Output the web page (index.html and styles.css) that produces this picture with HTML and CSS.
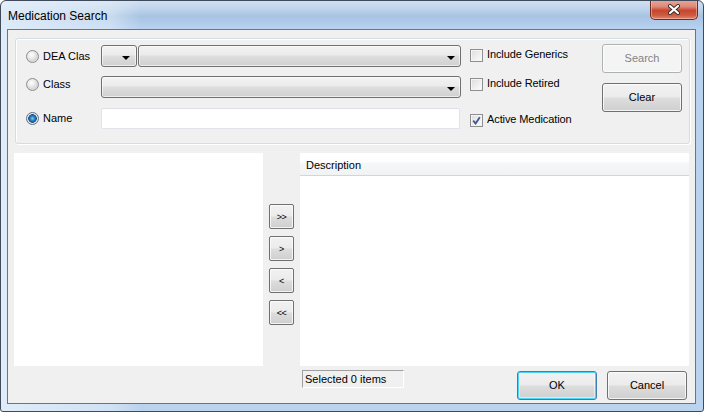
FILE: index.html
```html
<!DOCTYPE html>
<html>
<head>
<meta charset="utf-8">
<title>Medication Search</title>
<link rel="stylesheet" href="styles.css">
</head>
<body>
<div class="window">
  <div class="titlebar">
    <span class="title">Medication Search</span>
    <div class="close-btn">
      <svg width="14" height="11" viewBox="0 0 14 11">
        <path d="M3 2 L11 9 M11 2 L3 9" stroke="#3a2a2a" stroke-width="4" stroke-linecap="round" fill="none"/>
        <path d="M3 2 L11 9 M11 2 L3 9" stroke="#ffffff" stroke-width="2.2" stroke-linecap="round" fill="none"/>
      </svg>
    </div>
  </div>
  <div class="frame">
    <div class="client">
      <div class="group">
        <div class="left-col">
          <div class="row">
            <label class="opt"><span class="radio"></span><span class="opt-text">DEA Clas</span></label>
            <div class="combo combo-small"><span class="arrow"></span></div>
            <div class="combo combo-wide"><span class="arrow"></span></div>
          </div>
          <div class="row row-2">
            <label class="opt opt-raised"><span class="radio"></span><span class="opt-text">Class</span></label>
            <div class="combo combo-full"><span class="arrow"></span></div>
          </div>
          <div class="row row-3">
            <label class="opt"><span class="radio radio-on"></span><span class="opt-text">Name</span></label>
            <div class="textbox"></div>
          </div>
        </div>
        <div class="check-col">
          <div class="check check-1"><span class="box"></span><span class="check-text">Include Generics</span></div>
          <div class="check check-2"><span class="box"></span><span class="check-text">Include Retired</span></div>
          <div class="check check-3"><span class="box box-on">
            <svg width="9" height="9" viewBox="0 0 9 9"><path d="M1.2 4.6 L3.6 7.4 L7.8 1.2" stroke="#3f5796" stroke-width="1.8" fill="none"/></svg>
          </span><span class="check-text">Active Medication</span></div>
        </div>
        <div class="btn-col">
          <div class="btn btn-disabled">Search</div>
          <div class="btn btn-clear">Clear</div>
        </div>
      </div>

      <div class="lists">
        <div class="list-left"></div>
        <div class="arrows">
          <div class="abtn">&gt;&gt;</div>
          <div class="abtn">&gt;</div>
          <div class="abtn">&lt;</div>
          <div class="abtn">&lt;&lt;</div>
        </div>
        <div class="list-right">
          <div class="list-header">Description</div>
        </div>
      </div>

      <div class="footer">
        <div class="status">Selected 0 items</div>
        <div class="btn btn-default">OK</div>
        <div class="btn btn-cancel">Cancel</div>
      </div>
    </div>
  </div>
</div>
</body>
</html>
```

FILE: styles.css
```css
html, body {
  margin: 0;
  padding: 0;
  background: #ffffff;
}

.window {
  width: 704px;
  height: 412px;
  box-sizing: border-box;
  border: 1px solid #3f4b5a;
  border-radius: 6px 6px 3px 3px;
  background:
    linear-gradient(90deg, rgba(230,240,250,0.85) 0px, rgba(230,240,250,0.5) 110px, rgba(230,240,250,0) 140px),
    linear-gradient(180deg, #cfe0f2 0px, #bed4ec 8px, #a9c4e1 15px, #b0cbea 22px, #b8d2ef 28px, #bad3ee 100%);
  display: flex;
  flex-direction: column;
  overflow: hidden;
  font-family: "Liberation Sans", Arial, sans-serif;
}

.titlebar {
  height: 28px;
  flex: none;
  display: flex;
  align-items: flex-start;
  padding-left: 7px;
  padding-right: 5px;
}

.title {
  font-size: 12px;
  color: #000;
  line-height: 14px;
  margin-top: 8px;
}

.close-btn {
  margin-left: auto;
  margin-top: -1px;
  width: 48px;
  height: 20px;
  box-sizing: border-box;
  border: 1px solid #6f2b22;
  border-top: none;
  border-radius: 0 0 5px 5px;
  background: linear-gradient(180deg, #e9a899 0%, #dc8a78 35%, #c6462f 55%, #cc5a40 80%, #e08a6e 100%);
  box-shadow: inset 0 0 0 1px rgba(255,200,190,0.5);
  display: flex;
  align-items: center;
  justify-content: center;
}

.frame {
  flex: 1;
  padding: 0 7px 7px 6px;
  display: flex;
}

.client {
  flex: 1;
  border: 1px solid #66768a;
  background: #f0f0f0;
  display: flex;
  flex-direction: column;
  font-size: 11px;
  color: #000;
}

/* group box */
.group {
  margin: 8px 5px 0 7px;
  height: 106px;
  box-sizing: border-box;
  border: 1px solid #d5dde4;
  border-radius: 3px;
  box-shadow: inset 1px 1px 0 #ffffff, 1px 1px 0 #ffffff;
  display: flex;
  flex: none;
}

.left-col {
  width: 435px;
  padding: 6px 0 0 10px;
}

.row {
  display: flex;
  align-items: center;
  height: 22px;
}

.row-2 { margin-top: 9px; }
.row-3 { margin-top: 10px; height: 21px; }

.opt {
  width: 75px;
  display: flex;
  align-items: center;
  flex: none;
}

.opt-raised { margin-bottom: 5px; }

.radio {
  width: 13px;
  height: 13px;
  box-sizing: border-box;
  border-radius: 50%;
  border: 1px solid #8d8d8d;
  background: radial-gradient(circle at 40% 35%, #fdfdfd 0, #eeeeee 3px, #d7d7d7 6px, #e9e9e9 100%);
  flex: none;
}

.radio-on {
  border-color: #5a6f86;
  background: radial-gradient(circle at 50% 50%, #6fd0ff 0, #2a8ad6 2px, #1a5f9e 3.5px, #2c4c70 4px, #e8e8e8 4.6px, #f2f2f2 100%);
}

.opt-text {
  margin-left: 4px;
  line-height: 13px;
}

.combo {
  height: 22px;
  box-sizing: border-box;
  border: 1px solid #707070;
  border-radius: 3px;
  background: linear-gradient(180deg, #f3f3f3 0%, #ebebeb 45%, #dedede 50%, #d0d0d0 100%);
  box-shadow: inset 0 0 0 1px rgba(255,255,255,0.6);
  display: flex;
  align-items: center;
  justify-content: flex-end;
  flex: none;
}

.combo-small { width: 36px; padding-right: 6px; }
.combo-wide { width: 323px; margin-left: 1px; padding-right: 5px; }
.combo-full { width: 360px; padding-right: 5px; }

.arrow {
  width: 0;
  height: 0;
  border-left: 4px solid transparent;
  border-right: 4px solid transparent;
  border-top: 4px solid #000;
  margin-top: 3px;
}

.textbox {
  width: 359px;
  height: 21px;
  box-sizing: border-box;
  background: #ffffff;
  border: 1px solid #e2e3ea;
  border-top-color: #dcdfe6;
  border-radius: 2px;
}

/* check column */
.check-col {
  margin-left: 9px;
  width: 132px;
  padding-top: 10px;
}

.check {
  display: flex;
  align-items: center;
  height: 13px;
}

.check-2 { margin-top: 16px; }
.check-3 { margin-top: 23px; }

.box {
  width: 13px;
  height: 13px;
  box-sizing: border-box;
  border: 1px solid #8f8f8f;
  background: linear-gradient(135deg, #dcdcdc 0%, #f0f0f0 60%, #fbfbfb 100%);
  box-shadow: inset 0 0 0 1px #f4f4f4;
  flex: none;
  display: flex;
  align-items: center;
  justify-content: center;
}

.check-text {
  margin-left: 4px;
  margin-bottom: 3px;
  letter-spacing: -0.1px;
}

/* buttons */
.btn-col {
  width: 80px;
  padding-top: 5px;
}

.btn {
  width: 80px;
  height: 29px;
  box-sizing: border-box;
  border: 1px solid #707070;
  border-radius: 3px;
  background: linear-gradient(180deg, #f2f2f2 0%, #ebebeb 48%, #dddddd 52%, #cfcfcf 100%);
  box-shadow: inset 0 0 0 1px rgba(255,255,255,0.75);
  display: flex;
  align-items: center;
  justify-content: center;
  flex: none;
  font-size: 11px;
  padding-bottom: 2px;
}

.btn-disabled {
  border-color: #adb2b5;
  background: #f4f4f4;
  box-shadow: inset 0 0 0 1px #fcfcfc;
  color: #838383;
}

.btn-clear { margin-top: 10px; }

/* lists */
.lists {
  margin-top: 9px;
  height: 213px;
  display: flex;
  flex: none;
}

.list-left {
  margin-left: 6px;
  width: 249px;
  background: #ffffff;
}

.arrows {
  width: 37px;
  padding: 51px 0 0 6px;
  box-sizing: border-box;
  display: flex;
  flex-direction: column;
  gap: 7px;
}

.abtn {
  width: 25px;
  height: 25px;
  box-sizing: border-box;
  border: 1px solid #707070;
  border-radius: 2px;
  background: linear-gradient(180deg, #f2f2f2 0%, #ebebeb 48%, #dddddd 52%, #cfcfcf 100%);
  box-shadow: inset 0 0 0 1px rgba(255,255,255,0.75);
  display: flex;
  align-items: center;
  justify-content: center;
  font-size: 9px;
  letter-spacing: -0.5px;
}

.list-right {
  width: 389px;
  background: #ffffff;
}

.list-header {
  height: 23px;
  box-sizing: border-box;
  border-bottom: 1px solid #d5d5d5;
  background: linear-gradient(180deg, #ffffff 0%, #ffffff 40%, #f6f7f9 45%, #f1f2f4 100%);
  padding: 6px 0 0 6px;
  font-size: 11px;
}

/* footer */
.footer {
  flex: 1;
  display: flex;
  align-items: flex-start;
  padding: 0 8px 0 294px;
}

.status {
  margin-top: 4px;
  width: 102px;
  height: 18px;
  box-sizing: border-box;
  border: 1px solid;
  border-color: #a0a0a0 #ffffff #ffffff #a0a0a0;
  padding: 2px 0 0 2px;
  font-size: 11px;
}

.btn-default {
  margin-top: 5px;
  margin-left: auto;
  border-color: #3c7fb1;
  box-shadow: inset 0 0 0 1px #48d5f7, inset 0 0 0 2px rgba(255,255,255,0.5);
}

.btn-cancel {
  margin-top: 5px;
  margin-left: 10px;
}
```
